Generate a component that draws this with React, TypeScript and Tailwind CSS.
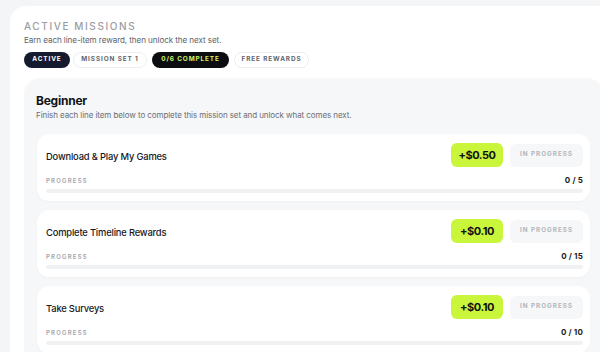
const missions = [
  { title: 'Download & Play My Games', reward: '+$0.50', done: 0, total: 5 },
  { title: 'Complete Timeline Rewards', reward: '+$0.10', done: 0, total: 15 },
  { title: 'Take Surveys', reward: '+$0.10', done: 0, total: 10 },
];

function MissionCard({ title, reward, done, total }: (typeof missions)[number]) {
  return (
    <div className="rounded-xl bg-white pl-[9px] pr-[7px] pt-[9px] pb-[8px] shadow-[0_1px_3px_rgba(0,0,0,0.03)]">
      <div className="flex items-center">
        <div className="flex-1 pt-[4px] text-[9.4px] font-medium tracking-[-0.02em] text-[#16181d]">{title}</div>
        <div className="flex h-[24px] w-[52px] items-center justify-center rounded-md bg-[#c9f53b] text-[11px] font-bold tracking-[-0.04em] text-[#111]">
          {reward}
        </div>
        <div className="ml-[7px] flex h-[23px] w-[73px] items-center justify-center rounded-md bg-[#f6f7f8] text-[6.3px] font-bold tracking-[0.16em] text-[#b3b5ba]">
          IN PROGRESS
        </div>
      </div>
      <div className="mt-[7px] flex h-[12px] items-center justify-between">
        <span className="text-[6px] font-semibold tracking-[0.2em] text-[#a3a5aa]">PROGRESS</span>
        <span className="text-[8px] font-bold tracking-[0.02em] text-[#1a1c22]">
          {done} / {total}
        </span>
      </div>
      <div className="mt-[3px] h-[4px] rounded-full bg-[#f0f1f3]" />
    </div>
  );
}

const pill = 'flex h-[16px] items-center justify-center rounded-full text-[6.4px] font-bold tracking-[0.14em]';

export default function App() {
  return (
    <div className="h-[352px] w-[600px] overflow-hidden bg-[#f4f5f7] font-['Inter',sans-serif]">
      <div className="ml-[10px] mt-[6px] w-[620px] rounded-2xl bg-white pl-[14px] pt-[13px]">
        <h1 className="text-[10px] leading-[14px] font-medium tracking-[0.16em] text-[#9b9da3]">ACTIVE MISSIONS</h1>
        <p className="mt-[2px] text-[8.1px] leading-[11px] tracking-[-0.01em] text-[#5f626a]">
          Earn each line-item reward, then unlock the next set.
        </p>
        <div className="mt-[6px] flex">
          <span className={`${pill} w-[46px] bg-[#151a2e] text-white`}>ACTIVE</span>
          <span className={`${pill} ml-[3px] w-[74px] border border-[#eceef1] bg-white text-[#62656c]`}>MISSION SET 1</span>
          <span className={`${pill} ml-[5px] w-[77px] bg-[#0c0d10] text-[#d4f56a]`}>0/6 COMPLETE</span>
          <span className={`${pill} ml-[5px] w-[75px] border border-[#eceef1] bg-white text-[#62656c]`}>FREE REWARDS</span>
        </div>
        <section className="mt-[10px] w-[579px] rounded-2xl bg-[#f6f7f9] pl-[13px] pr-[13px] pt-[14px] pb-4">
          <h2 className="-ml-[1px] text-[12px] leading-[17px] font-bold tracking-[-0.02em] text-[#111318]">Beginner</h2>
          <p className="-ml-[1px] mt-[1px] text-[8px] leading-[11px] tracking-[-0.01em] text-[#6b6e75]">
            Finish each line item below to complete this mission set and unlock what comes next.
          </p>
          <div className="mt-[13px] flex flex-col gap-[9px]">
            {missions.map((m) => (
              <MissionCard key={m.title} {...m} />
            ))}
          </div>
        </section>
      </div>
    </div>
  );
}
